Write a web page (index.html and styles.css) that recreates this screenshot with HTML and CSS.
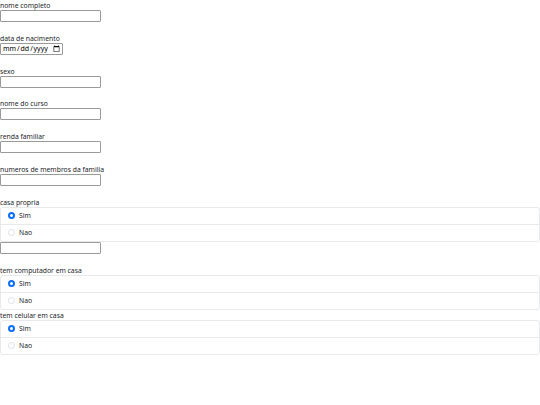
FILE: index.html
```html
<!DOCTYPE html>
<html>
<head>
<meta charset="utf-8">
<link rel="stylesheet" href="styles.css">
</head>
<body>
<form class="form">
  <div class="field">
    <label class="lbl">nome completo</label>
    <input class="txt" type="text">
  </div>
  <div class="field">
    <label class="lbl">data de nacimento</label>
    <input class="date" type="date">
  </div>
  <div class="field">
    <label class="lbl">sexo</label>
    <input class="txt" type="text">
  </div>
  <div class="field">
    <label class="lbl">nome do curso</label>
    <input class="txt" type="text">
  </div>
  <div class="field">
    <label class="lbl">renda familiar</label>
    <input class="txt" type="text">
  </div>
  <div class="field">
    <label class="lbl">numeros de membros da familia</label>
    <input class="txt" type="text">
  </div>
  <div class="field">
    <label class="lbl">casa propria</label>
    <ul class="group">
      <li class="item"><span class="radio on"></span>Sim</li>
      <li class="item"><span class="radio"></span>Nao</li>
    </ul>
    <input class="txt" type="text">
  </div>
  <div class="field tight">
    <label class="lbl">tem computador em casa</label>
    <ul class="group">
      <li class="item"><span class="radio on"></span>Sim</li>
      <li class="item"><span class="radio"></span>Nao</li>
    </ul>
  </div>
  <div class="field tight">
    <label class="lbl">tem celular em casa</label>
    <ul class="group">
      <li class="item"><span class="radio on"></span>Sim</li>
      <li class="item"><span class="radio"></span>Nao</li>
    </ul>
  </div>
</form>
</body>
</html>
```
FILE: styles.css
```css
html, body {
  margin: 0;
  padding: 0;
  background: #fff;
}
body {
  font-family: "Noto Sans", "Open Sans", sans-serif;
  font-size: 6.8px;
  color: #212529;
}
.form {
  display: flex;
  flex-direction: column;
  width: 540px;
}
.field {
  display: flex;
  flex-direction: column;
  align-items: flex-start;
  margin-bottom: 10.8px;
}
.field.tight {
  margin-bottom: 0;
}
.lbl {
  display: block;
  box-sizing: border-box;
  padding-top: 1px;
  line-height: 9px;
  height: 10px;
}
.txt {
  box-sizing: border-box;
  width: 101px;
  height: 12px;
  margin: 0;
  padding: 0 2px;
  border: 1px solid #9a9a9a;
  border-radius: 1px;
  font-size: 7px;
  background: #fff;
}
.date {
  box-sizing: border-box;
  width: 63px;
  height: 12px;
  margin: 0;
  padding: 0 1px;
  border: 1px solid #9a9a9a;
  border-radius: 1px;
  font-family: "Noto Sans", sans-serif;
  font-size: 7px;
  color: #000;
  background: #fff;
}
.date::-webkit-datetime-edit-text {
  padding: 0;
  word-spacing: -3px;
  letter-spacing: -0.2px;
}
.date::-webkit-datetime-edit-fields-wrapper {
  padding: 0;
}
.date::-webkit-calendar-picker-indicator {
  margin: 0;
  padding: 0 1px;
  width: 7px;
  height: 7px;
}
.group {
  list-style: none;
  margin: 0;
  padding: 0;
  width: 540px;
  box-sizing: border-box;
  border: 1px solid #e7e9eb;
  border-radius: 3px;
}
.item {
  display: flex;
  align-items: center;
  height: 16px;
  padding-left: 7px;
  line-height: 16px;
}
.item + .item {
  border-top: 1px solid #e7e9eb;
}
.radio {
  box-sizing: border-box;
  width: 7px;
  height: 7px;
  border-radius: 50%;
  border: 1px solid #dee2e6;
  margin-right: 4px;
  background: #fff;
}
.radio.on {
  border: 2px solid #0d6efd;
  background: #fff;
}
```
